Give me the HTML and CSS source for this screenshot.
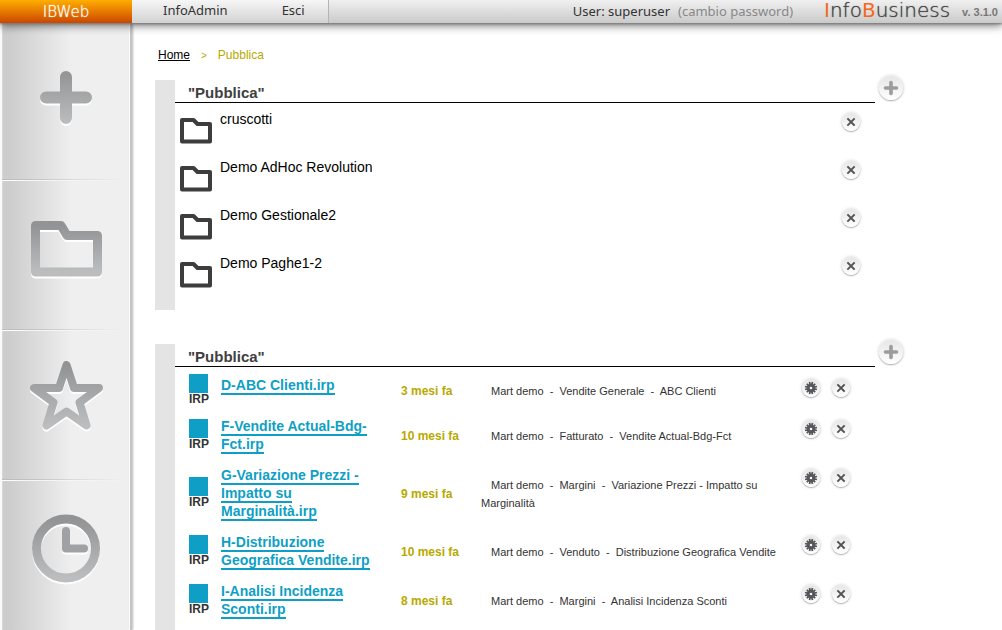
FILE: index.html
```html
<!DOCTYPE html>
<html lang="it">
<head>
<meta charset="utf-8">
<title>IBWeb - Pubblica</title>
<link rel="stylesheet" href="styles.css">
</head>
<body>
<svg class="defs" aria-hidden="true">
  <defs>
    <linearGradient id="steel" x1="0" y1="0" x2="0" y2="1">
      <stop offset="0" stop-color="#929394"/>
      <stop offset="1" stop-color="#bcbdbe"/>
    </linearGradient>
  </defs>
  <symbol id="i-folder" viewBox="0 0 32 26">
    <path d="M2 2H13.500L17.500 6H30V23.500H2Z" fill="none" stroke="#3d3d3d" stroke-width="4" stroke-linejoin="round"/>
  </symbol>
  <symbol id="i-close" viewBox="0 0 18 18">
    <path d="M6 6L12 12M12 6L6 12" fill="none" stroke="#515255" stroke-width="1.800" stroke-linecap="square"/>
  </symbol>
  <symbol id="i-gear" viewBox="0 0 18 18">
    <g stroke="#55565a" stroke-width="2.500">
      <path d="M7.500 3L10.500 15M10.500 3L7.500 15M3 7.500L15 10.500M3 10.500L15 7.500M4.800 4.800L13.200 13.200M13.200 4.800L4.800 13.200" fill="none" stroke-width="1.800"/>
      <circle cx="9" cy="9" r="2.800" fill="#f4f4f4" stroke-width="3"/>
    </g>
  </symbol>
  <symbol id="i-add" viewBox="0 0 24 24">
    <path d="M12 6.500V17.500M6.500 12H17.500" fill="none" stroke="#9b9c9e" stroke-width="3.600" stroke-linecap="round"/>
  </symbol>
</svg>

<header class="topbar">
  <a class="brand" href="#">IBWeb</a>
  <nav class="menu">
    <a href="#">InfoAdmin</a>
    <a href="#">Esci</a>
  </nav>
  <div class="account">
    <span class="user">User: superuser</span>
    <a class="password" href="#">(cambio password)</a>
    <span class="product"><b>I</b>nfo<b>B</b>usiness</span>
    <span class="version">v. 3.1.0</span>
  </div>
</header>

<div class="layout">
  <nav class="sidebar">
    <a href="#" aria-label="Nuovo"><svg viewBox="26 58 80 80"><g fill="url(#steel)">
      <path d="M60 77a6 6 0 0 1 12 0V91.500H86a6 6 0 0 1 0 12H72V118a6 6 0 0 1-12 0V103.500H46a6 6 0 0 1 0-12H60Z"/></g></svg></a>
    <a href="#" aria-label="Cartelle"><svg viewBox="26 208 80 80">
      <path class="line" d="M35.500 225.500H61L67 235.500H97.500V272H35.500Z"/></svg></a>
    <a href="#" aria-label="Preferiti"><svg viewBox="26 358 80 80">
      <path class="line star" d="M66.500 365L74 388H99L79.500 402.500L86.500 425.500L66.500 411.500L46.500 425.500L53.500 402.500L34 388H59Z"/></svg></a>
    <a href="#" aria-label="Recenti"><svg viewBox="26 508 80 80">
      <circle class="line" cx="66" cy="548.500" r="29.500"/>
      <path class="hand" d="M66 531V548.500H84"/></svg></a>
  </nav>

  <main class="content">
    <nav class="crumbs">
      <a href="#">Home</a><span class="sep">&gt;</span><span>Pubblica</span>
    </nav>

    <section class="panel folders">
      <div class="panel-body">
        <h2>"Pubblica"</h2>
        <ul>
          <li><svg class="folder"><use href="#i-folder"/></svg><a href="#">cruscotti</a><button class="round" aria-label="Elimina"><svg><use href="#i-close"/></svg></button></li>
          <li><svg class="folder"><use href="#i-folder"/></svg><a href="#">Demo AdHoc Revolution</a><button class="round" aria-label="Elimina"><svg><use href="#i-close"/></svg></button></li>
          <li><svg class="folder"><use href="#i-folder"/></svg><a href="#">Demo Gestionale2</a><button class="round" aria-label="Elimina"><svg><use href="#i-close"/></svg></button></li>
          <li><svg class="folder"><use href="#i-folder"/></svg><a href="#">Demo Paghe1-2</a><button class="round" aria-label="Elimina"><svg><use href="#i-close"/></svg></button></li>
        </ul>
      </div>
      <button class="round add" aria-label="Aggiungi"><svg><use href="#i-add"/></svg></button>
    </section>

    <section class="panel reports">
      <div class="panel-body">
        <h2>"Pubblica"</h2>
        <table>
          <colgroup><col class="c-icon"><col class="c-name"><col class="c-age"><col class="c-path"><col class="c-actions"></colgroup>
          <tr>
            <td class="icon"><span class="irp">IRP</span></td>
            <td class="name"><a href="#">D-ABC Clienti.irp</a></td>
            <td class="age">3 mesi fa</td>
            <td class="path">Mart demo &nbsp;-&nbsp; Vendite Generale &nbsp;-&nbsp; ABC Clienti</td>
            <td class="actions"><button class="round" aria-label="Impostazioni"><svg><use href="#i-gear"/></svg></button><button class="round" aria-label="Elimina"><svg><use href="#i-close"/></svg></button></td>
          </tr>
          <tr>
            <td class="icon"><span class="irp">IRP</span></td>
            <td class="name"><a href="#">F-Vendite Actual-Bdg-Fct.irp</a></td>
            <td class="age">10 mesi fa</td>
            <td class="path">Mart demo &nbsp;-&nbsp; Fatturato &nbsp;-&nbsp; Vendite Actual-Bdg-Fct</td>
            <td class="actions"><button class="round" aria-label="Impostazioni"><svg><use href="#i-gear"/></svg></button><button class="round" aria-label="Elimina"><svg><use href="#i-close"/></svg></button></td>
          </tr>
          <tr>
            <td class="icon"><span class="irp">IRP</span></td>
            <td class="name"><a href="#">G-Variazione Prezzi - Impatto su Marginalità.irp</a></td>
            <td class="age">9 mesi fa</td>
            <td class="path">Mart demo &nbsp;-&nbsp; Margini &nbsp;-&nbsp; Variazione Prezzi - Impatto su Marginalità</td>
            <td class="actions"><button class="round" aria-label="Impostazioni"><svg><use href="#i-gear"/></svg></button><button class="round" aria-label="Elimina"><svg><use href="#i-close"/></svg></button></td>
          </tr>
          <tr>
            <td class="icon"><span class="irp">IRP</span></td>
            <td class="name"><a href="#">H-Distribuzione Geografica Vendite.irp</a></td>
            <td class="age">10 mesi fa</td>
            <td class="path">Mart demo &nbsp;-&nbsp; Venduto &nbsp;-&nbsp; Distribuzione Geografica Vendite</td>
            <td class="actions"><button class="round" aria-label="Impostazioni"><svg><use href="#i-gear"/></svg></button><button class="round" aria-label="Elimina"><svg><use href="#i-close"/></svg></button></td>
          </tr>
          <tr>
            <td class="icon"><span class="irp">IRP</span></td>
            <td class="name"><a href="#">I-Analisi Incidenza Sconti.irp</a></td>
            <td class="age">8 mesi fa</td>
            <td class="path">Mart demo &nbsp;-&nbsp; Margini &nbsp;-&nbsp; Analisi Incidenza Sconti</td>
            <td class="actions"><button class="round" aria-label="Impostazioni"><svg><use href="#i-gear"/></svg></button><button class="round" aria-label="Elimina"><svg><use href="#i-close"/></svg></button></td>
          </tr>
        </table>
      </div>
      <button class="round add" aria-label="Aggiungi"><svg><use href="#i-add"/></svg></button>
    </section>
  </main>
</div>
</body>
</html>
```
FILE: styles.css
```css
* { box-sizing: border-box; }

body {
  margin: 0;
  min-height: 100vh;
  display: flex;
  flex-direction: column;
  background: #fff;
  color: #000;
  font-family: "Liberation Sans", Arial, sans-serif;
  font-size: 14px;
}

a { color: inherit; text-decoration: none; }
svg { display: block; }
.defs { position: absolute; width: 0; height: 0; }

/* top bar */
.topbar {
  position: relative;
  z-index: 1;
  display: flex;
  height: 23px;
  background: linear-gradient(#f0f0f0, #cacaca);
  box-shadow: 0 1px 2px #777, 0 3px 8px rgba(0, 0, 0, .5);
  font-family: "Noto Sans", Tahoma, sans-serif;
  font-size: 13px;
  line-height: 21px;
  color: #333;
}

.brand {
  width: 132px;
  background: linear-gradient(#ffae00, #cc4600);
  color: #fff;
  font-family: "DejaVu Sans Light", "DejaVu Sans", sans-serif;
  font-weight: 200;
  font-size: 15px;
  line-height: 24px;
  text-align: center;
  text-shadow: 0 0 1px #fff;
}

.menu {
  display: flex;
  gap: 54px;
  padding: 0 23px 0 31px;
  border-right: 1px solid #b4b4b4;
  background: linear-gradient(#f6f6f6, #d2d2d2);
}

.account {
  display: flex;
  flex: 1;
  justify-content: flex-end;
  padding-right: 4px;
  line-height: 23px;
}

.password { margin-left: 8px; color: #888; }

.product {
  margin: 0 12px 0 31px;
  font-family: "DejaVu Sans Light", "DejaVu Sans", sans-serif;
  font-weight: 200;
  font-size: 20px;
  line-height: 20px;
  color: #444;
  text-shadow: 0 0 1px #555;
}

.product b {
  font-family: "DejaVu Sans", sans-serif;
  font-weight: 400;
  color: #f26a1b;
  text-shadow: none;
}

.version {
  font-family: "Liberation Sans", Arial, sans-serif;
  font-size: 11px;
  font-weight: bold;
  line-height: 25px;
  color: #777;
}

/* sidebar */
.layout { display: flex; flex: 1; }

.sidebar {
  flex: none;
  width: 132px;
  padding-top: 6px;
  border-left: 2px solid #fafafa;
  border-right: 2px solid #c4c4c4;
  background: linear-gradient(to right, #cdcdcd 8px, #efefef 70px);
  box-shadow: 1px 0 2px #bbb, inset 1px 0 #d8d8d8, inset -1px 0 #fafafa;
}

.sidebar a {
  display: flex;
  justify-content: center;
  height: 150px;
  padding-top: 29px;
}

.sidebar a + a {
  background:
    linear-gradient(to right, #bbb, rgba(187, 187, 187, 0) 95%) 0 0 / 100% 1px no-repeat,
    linear-gradient(to right, #fff, rgba(255, 255, 255, 0)) 0 1px / 100% 1px no-repeat;
}

.sidebar svg {
  width: 80px;
  height: 80px;
  filter: drop-shadow(0 2px 0 #fff);
}

.line { fill: none; stroke: url(#steel); stroke-width: 9; stroke-linejoin: round; }
.star { stroke-width: 8; }
.hand { fill: none; stroke: #a0a1a2; stroke-width: 8; stroke-linecap: round; stroke-linejoin: round; }

/* content */
.content {
  flex: 1;
  display: flex;
  flex-direction: column;
  min-width: 0;
  padding: 25px 97px 0 23px;
}

.crumbs {
  padding-left: 3px;
  height: 32px;
  font-size: 12px;
  line-height: 14px;
  color: #b8a900;
}

.crumbs a { color: #000; text-decoration: underline; }
.sep { margin: 0 11px; font-size: 10px; }

.panel { display: grid; grid-template-columns: 1fr 30px; }
.folders { margin-bottom: 34px; }
.folders .panel-body { padding-bottom: 15px; }
.reports { flex: 1; }

.panel-body { border-left: 20px solid #e4e4e4; }

h2 {
  margin: 0;
  height: 23px;
  padding: 4px 13px 0;
  border-bottom: 1px solid #000;
  font-size: 15px;
  line-height: 18px;
  color: #404040;
}

ul { margin: 0; padding: 0; list-style: none; }

li {
  display: flex;
  align-items: flex-start;
  height: 48px;
  padding: 8px 15px 0 5px;
}

li a { flex: 1; padding-left: 8px; line-height: 16px; }
.folder { width: 32px; height: 26px; margin-top: 7px; }

.round {
  width: 18px;
  height: 18px;
  padding: 0;
  border: 0;
  border-radius: 50%;
  background: linear-gradient(#e6e6e6, #fff);
  box-shadow: 0 1px 1px #b4b4b4, 0 0 3px 1px #e0e0e0;
}

.round svg { width: 100%; height: 100%; }
li .round { margin-top: 2px; }
.add { width: 24px; height: 24px; margin: -4px 0 0 4px; }

/* report list */
table {
  width: 100%;
  margin-top: 2px;
  border-collapse: collapse;
  table-layout: fixed;
}

td { padding: 0; vertical-align: middle; }
.c-icon { width: 46px; }
.c-name { width: 180px; }
.c-age { width: 80px; }
.c-actions { width: 73px; }

td.icon { padding: 5px 0 5px 14px; }

.irp {
  display: block;
  height: 31px;
  border-top: 19px solid #0f9fc6;
  width: 19px;
  font-size: 12px;
  font-weight: bold;
  line-height: 13px;
  color: #333;
}

td.name {
  padding: 7px 20px 6px 0;
  vertical-align: top;
  font-weight: bold;
  line-height: 18px;
  color: #0f9fc6;
}

.name a { border-bottom: 2px solid #0f9fc6; }
.age { font-size: 12px; font-weight: bold; color: #b8a900; }
.path { padding-right: 10px; font-size: 11px; line-height: 18px; text-indent: 10px; color: #333; }
td.age, td.path { padding-top: 2px; }

td.actions { padding-top: 10px; vertical-align: top; font-size: 0; }
.actions .round + .round { margin-left: 12px; }
```
